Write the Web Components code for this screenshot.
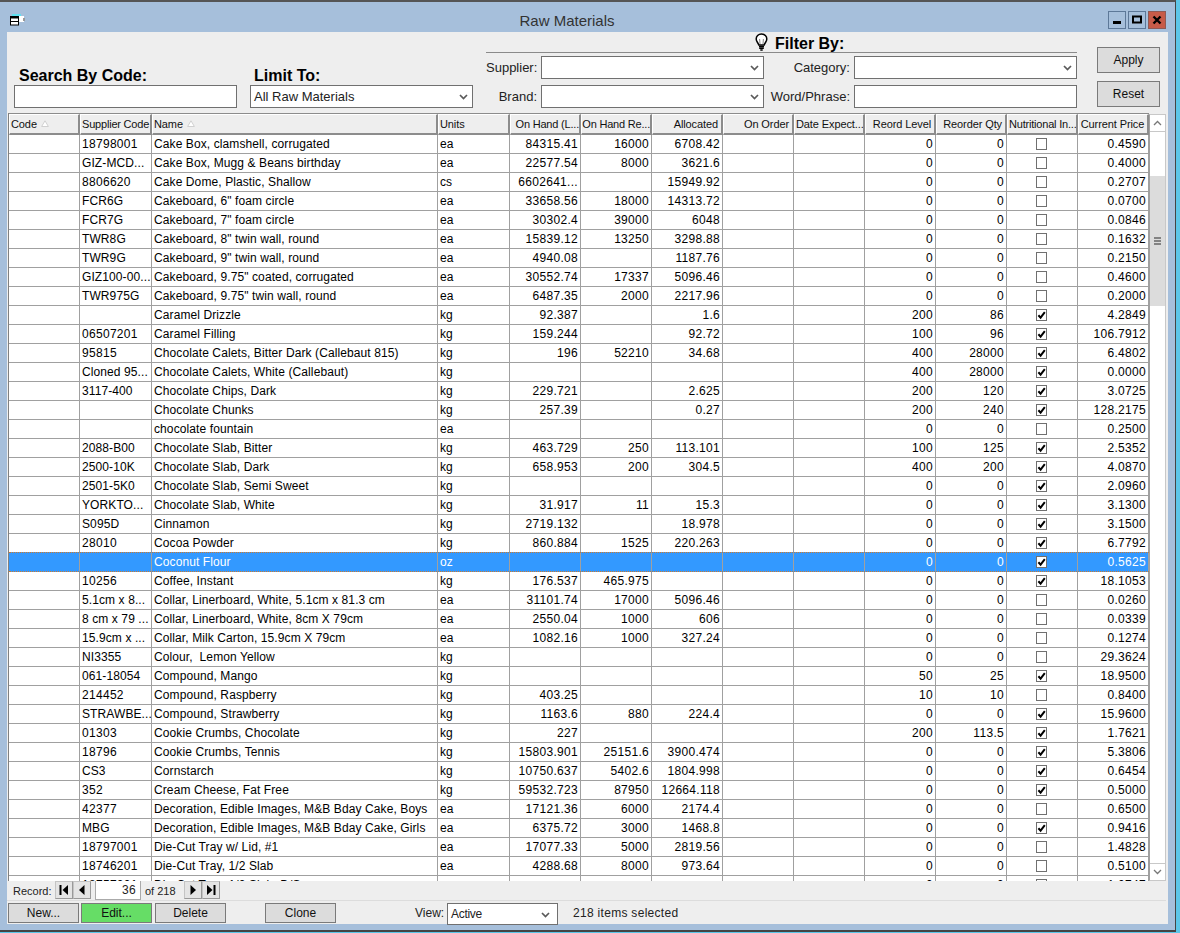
<!DOCTYPE html>
<html>
<head>
<meta charset="utf-8">
<title>Raw Materials</title>
<style>
    html, body { margin: 0; padding: 0; background: #5cc6e8; }
    body { font: 12px "Liberation Sans", Arial, sans-serif; color: #000; width: 1180px; height: 933px; overflow: hidden; }
</style>
</head>
<body>
<raw-window heading="Raw Materials">
    <filter-panel></filter-panel>
    <data-grid></data-grid>
    <record-bar current="36" total="218"></record-bar>
    <action-bar></action-bar>
</raw-window>

<script>
const CHEVRON = `<svg width="9" height="6" viewBox="0 0 9 6"><polyline points="1,1 4.5,4.5 8,1" fill="none" stroke="#5a5a5a" stroke-width="1.7"/></svg>`;

class RawWindow extends HTMLElement{
    constructor(){
        super();
        this.attachShadow({ mode: 'open' });
        this.shadowRoot.appendChild(this.getTemplate().content);
        this.shadowRoot.getElementById("heading").textContent = this.getAttribute("heading");
    }

    getTemplate(){
        const template = document.createElement("template");
        template.innerHTML = `
            <style>
                :host { display: flex; flex-direction: column; width: 1176px; height: 932px; box-sizing: border-box;
                        background: #a6bfdb; border-top: 2px solid #555; border-right: 1px solid #444; border-bottom: 2px solid #444; }
                .title { height: 30px; display: flex; align-items: center; padding: 0 9px 0 10px; box-sizing: border-box; }
                .title svg.app { flex: none; margin-top: 6px; }
                h1 { flex: 1; margin: 7px 0 0 0; padding-left: 1px; text-align: center; font: 15px "Liberation Sans", Arial, sans-serif; color: #333; }
                .caps { display: flex; gap: 2px; margin-top: 6px; }
                .cap { width: 18px; height: 18px; box-sizing: border-box; border: 1px solid #5d7898; background: #a6bfdb; display: flex; align-items: center; justify-content: center; }
                .cap.close { background: #c75b49; border-color: #8f5a55; }
                .body { margin: 0 7px 6px 7px; flex: 1; background: #eee; display: flex; flex-direction: column; min-height: 0; }
            </style>
            <div class="title">
                <svg class="app" width="15" height="12" viewBox="0 0 15 12">
                    <rect x="2" y="0" width="9" height="3" fill="#5fe0f0"/>
                    <rect x="7" y="2" width="7" height="6" fill="#fff"/>
                    <rect x="13" y="4" width="2" height="3" fill="#999"/>
                    <rect x="0.5" y="2.5" width="8" height="8.5" fill="#fff" stroke="#000"/>
                    <rect x="0.5" y="2.5" width="8" height="2" fill="#000"/>
                    <line x1="1" y1="7.5" x2="8" y2="7.5" stroke="#000"/>
                </svg>
                <h1 id="heading"></h1>
                <div class="caps">
                    <div class="cap"><svg width="10" height="10"><rect x="1" y="6" width="8" height="3" fill="#000"/></svg></div>
                    <div class="cap"><svg width="10" height="10"><rect x="1" y="1.5" width="8" height="6" fill="none" stroke="#000" stroke-width="2"/></svg></div>
                    <div class="cap close"><svg width="10" height="10"><path d="M1.5 1.5 L8.5 8.5 M8.5 1.5 L1.5 8.5" stroke="#000" stroke-width="2.4"/></svg></div>
                </div>
            </div>
            <div class="body"><slot></slot></div>
        `;
        return template;
    }
}

class ComboBox extends HTMLElement{
    constructor(){
        super();
        this.attachShadow({ mode: 'open' });
        this.shadowRoot.appendChild(this.getTemplate().content);
    }

    getTemplate(){
        const template = document.createElement("template");
        template.innerHTML = `
            <style>
                :host { display: flex; align-items: center; box-sizing: border-box; height: 23px; background: #fff; border: 1px solid #707070;
                        padding: 0 4px 0 3px; font: 13px "Liberation Sans", Arial, sans-serif; color: #222; }
                span { flex: 1; white-space: nowrap; }
                svg { flex: none; margin-top: 1px; }
            </style>
            <span><slot></slot></span>${CHEVRON}
        `;
        return template;
    }
}

class WinButton extends HTMLElement{
    constructor(){
        super();
        this.attachShadow({ mode: 'open' });
        this.shadowRoot.appendChild(this.getTemplate().content);
    }

    getTemplate(){
        const template = document.createElement("template");
        template.innerHTML = `
            <style>
                :host { display: flex; align-items: center; justify-content: center; box-sizing: border-box; background: #dcdcdc; border: 1px solid #7a7a7a;
                        font: 12px "Liberation Sans", Arial, sans-serif; color: #111; }
                :host([green]) { background: #66dd66; }
            </style>
            <slot></slot>
        `;
        return template;
    }
}

class FilterPanel extends HTMLElement{
    constructor(){
        super();
        this.attachShadow({ mode: 'open' });
        this.shadowRoot.appendChild(this.getTemplate().content);
    }

    getTemplate(){
        const template = document.createElement("template");
        template.innerHTML = `
            <style>
                :host { display: flex; height: 81px; flex: none; font: 12px "Liberation Sans", Arial, sans-serif; }
                .block { width: 223px; display: flex; flex-direction: column; justify-content: flex-end; padding-bottom: 5px; box-sizing: border-box; }
                .search { margin-left: 7px; }
                .limit { margin-left: 13px; }
                .big { font-size: 16px; font-weight: bold; line-height: 18px; }
                .search .big { padding-left: 5px; }
                .limit .big { padding-left: 4px; }
                .input { height: 23px; box-sizing: border-box; background: #fff; border: 1px solid #707070; }
                .filter { margin-left: 13px; width: 591px; display: flex; flex-direction: column; }
                .filter-head { height: 21px; border-bottom: 1px solid #8a8a8a; box-sizing: border-box; display: flex; align-items: flex-end; padding-left: 269px; }
                .filter-head svg { flex: none; margin: 0 7px 1px 0; }
                .filter-head .big { line-height: 17px; }
                .fields { margin-top: 3px; display: grid; grid-template-columns: 51px 227px 86px 227px; row-gap: 6px; }
                label { text-align: right; line-height: 23px; color: #222; font-size: 13px; white-space: nowrap; }
                .fields combo-box, .fields .input { margin-left: 4px; }
                .btns { margin-left: 20px; width: 63px; display: flex; flex-direction: column; padding-top: 15px; box-sizing: border-box; gap: 8px; }
                .btns win-button { height: 26px; }
            </style>
            <div class="block search">
                <div class="big">Search By Code:</div>
                <div class="input"></div>
            </div>
            <div class="block limit">
                <div class="big">Limit To:</div>
                <combo-box>All Raw Materials</combo-box>
            </div>
            <div class="filter">
                <div class="filter-head">
                    <svg width="13" height="18" viewBox="0 0 13 18">
                        <path d="M6.5 1 C3.2 1 1.2 3.4 1.2 6 C1.2 8.4 3 9.6 3.8 12 L9.2 12 C10 9.6 11.8 8.4 11.8 6 C11.8 3.4 9.8 1 6.5 1 Z" fill="#fff" stroke="#000" stroke-width="1.5"/>
                        <path d="M5 11 L4.6 6 M8 11 L8.4 6" stroke="#888" fill="none"/>
                        <path d="M4 13.5 L9 13.5 M4.2 15.3 L8.8 15.3 M5.3 17 L7.7 17" stroke="#000" stroke-width="1.4"/>
                    </svg>
                    <div class="big">Filter By:</div>
                </div>
                <div class="fields">
                    <label>Supplier:</label><combo-box></combo-box>
                    <label>Category:</label><combo-box></combo-box>
                    <label>Brand:</label><combo-box></combo-box>
                    <label>Word/Phrase:</label><div class="input"></div>
                </div>
            </div>
            <div class="btns">
                <win-button>Apply</win-button>
                <win-button>Reset</win-button>
            </div>
        `;
        return template;
    }
}

// supplier | name | units | on hand | on hand reserved | allocated | reorder level | reorder qty | nutritional | price
const ROWS = `18798001|Cake Box, clamshell, corrugated|ea|84315.41|16000|6708.42|0|0|0|0.4590
GIZ-MCD...|Cake Box, Mugg & Beans birthday|ea|22577.54|8000|3621.6|0|0|0|0.4000
8806620|Cake Dome, Plastic, Shallow|cs|6602641...||15949.92|0|0|0|0.2707
FCR6G|Cakeboard, 6" foam circle|ea|33658.56|18000|14313.72|0|0|0|0.0700
FCR7G|Cakeboard, 7" foam circle|ea|30302.4|39000|6048|0|0|0|0.0846
TWR8G|Cakeboard, 8" twin wall, round|ea|15839.12|13250|3298.88|0|0|0|0.1632
TWR9G|Cakeboard, 9" twin wall, round|ea|4940.08||1187.76|0|0|0|0.2150
GIZ100-00...|Cakeboard, 9.75" coated, corrugated|ea|30552.74|17337|5096.46|0|0|0|0.4600
TWR975G|Cakeboard, 9.75" twin wall, round|ea|6487.35|2000|2217.96|0|0|0|0.2000
|Caramel Drizzle|kg|92.387||1.6|200|86|1|4.2849
06507201|Caramel Filling|kg|159.244||92.72|100|96|1|106.7912
95815|Chocolate Calets, Bitter Dark (Callebaut 815)|kg|196|52210|34.68|400|28000|1|6.4802
Cloned 95...|Chocolate Calets, White (Callebaut)|kg||||400|28000|1|0.0000
3117-400|Chocolate Chips, Dark|kg|229.721||2.625|200|120|1|3.0725
|Chocolate Chunks|kg|257.39||0.27|200|240|1|128.2175
|chocolate fountain|ea||||0|0|0|0.2500
2088-B00|Chocolate Slab, Bitter|kg|463.729|250|113.101|100|125|1|2.5352
2500-10K|Chocolate Slab, Dark|kg|658.953|200|304.5|400|200|1|4.0870
2501-5K0|Chocolate Slab, Semi Sweet|kg||||0|0|1|2.0960
YORKTO...|Chocolate Slab, White|kg|31.917|11|15.3|0|0|1|3.1300
S095D|Cinnamon|kg|2719.132||18.978|0|0|1|3.1500
28010|Cocoa Powder|kg|860.884|1525|220.263|0|0|1|6.7792
|Coconut Flour|oz||||0|0|1|0.5625
10256|Coffee, Instant|kg|176.537|465.975||0|0|1|18.1053
5.1cm x 8...|Collar, Linerboard, White, 5.1cm x 81.3 cm|ea|31101.74|17000|5096.46|0|0|0|0.0260
8 cm x 79 ...|Collar, Linerboard, White, 8cm X 79cm|ea|2550.04|1000|606|0|0|0|0.0339
15.9cm x ...|Collar, Milk Carton, 15.9cm X 79cm|ea|1082.16|1000|327.24|0|0|0|0.1274
NI3355|Colour,  Lemon Yellow|kg||||0|0|0|29.3624
061-18054|Compound, Mango|kg||||50|25|1|18.9500
214452|Compound, Raspberry|kg|403.25|||10|10|0|0.8400
STRAWBE...|Compound, Strawberry|kg|1163.6|880|224.4|0|0|1|15.9600
01303|Cookie Crumbs, Chocolate|kg|227|||200|113.5|1|1.7621
18796|Cookie Crumbs, Tennis|kg|15803.901|25151.6|3900.474|0|0|1|5.3806
CS3|Cornstarch|kg|10750.637|5402.6|1804.998|0|0|1|0.6454
352|Cream Cheese, Fat Free|kg|59532.723|87950|12664.118|0|0|1|0.5000
42377|Decoration, Edible Images, M&B Bday Cake, Boys|ea|17121.36|6000|2174.4|0|0|0|0.6500
MBG|Decoration, Edible Images, M&B Bday Cake, Girls|ea|6375.72|3000|1468.8|0|0|1|0.9416
18797001|Die-Cut Tray w/ Lid, #1|ea|17077.33|5000|2819.56|0|0|0|1.4828
18746201|Die-Cut Tray, 1/2 Slab|ea|4288.68|8000|973.64|0|0|0|0.5100
18757201|Die-Cut Tray, 1/2 Slab, D/S|ea||||0|0|0|1.0747`.split("\n").map(r => r.split("|"));

const HEADERS = [
    ["Code", 71, "l", true], ["Supplier Code", 72, "l tight"], ["Name", 286, "l", true], ["Units", 72, "l"],
    ["On Hand (L...", 71, "r tight"], ["On Hand Re...", 71, "r tight"], ["Allocated", 71, "r"], ["On Order", 71, "r"],
    ["Date Expect...", 71, "l"], ["Reord Level", 71, "r"], ["Reorder Qty", 71, "r"], ["Nutritional In...", 71, "l tight"], ["Current Price", 71, "mid"]
];

const SELECTED = 22;

class DataGrid extends HTMLElement{
    constructor(){
        super();
        this.attachShadow({ mode: 'open' });
        this.shadowRoot.appendChild(this.getTemplate().content);
        this.shadowRoot.getElementById("head").innerHTML = HEADERS.map(h =>
            `<div class="hc ${h[2]}" style="width:${h[1]}px"><span>${h[0]}</span>${h[3] ? this.sortMark() : ""}</div>`).join("");
        this.shadowRoot.getElementById("rows").innerHTML = ROWS.map((r, i) => this.rowHtml(r, i)).join("");
    }

    sortMark(){
        return `<svg width="8" height="7" viewBox="0 0 8 7"><path d="M4 0.8 L7.4 6.5 L0.6 6.5 Z" fill="#fff" stroke="#d0d0d0"/></svg>`;
    }

    esc(s){
        return s.replace(/&/g, "&amp;").replace(/</g, "&lt;");
    }

    cell(text, width, align){
        return `<div class="c ${align}" style="width:${width}px">${this.esc(text)}</div>`;
    }

    rowHtml(r, i){
        const box = r[8] === "1"
            ? `<svg width="11" height="12" viewBox="0 0 11 12"><rect x="0.5" y="0.5" width="10" height="11" fill="#fff" stroke="#707070"/><path d="M2.4 6.2 L4.6 8.6 L8.8 3.2" fill="none" stroke="#000" stroke-width="2"/></svg>`
            : `<svg width="11" height="12" viewBox="0 0 11 12"><rect x="0.5" y="0.5" width="10" height="11" fill="#fff" stroke="#707070"/></svg>`;
        const supplierClass = /^[\d.]+$/.test(r[0]) ? "l n" : "l";
        return `<div class="row${i === SELECTED ? " sel" : ""}">` +
            this.cell("", 71, "l") + this.cell(r[0], 72, supplierClass) + this.cell(r[1], 286, "l") + this.cell(r[2], 72, "l") +
            this.cell(r[3], 71, "r n") + this.cell(r[4], 71, "r n") + this.cell(r[5], 71, "r n") + this.cell("", 71, "r") + this.cell("", 71, "r") +
            this.cell(r[6], 71, "r n") + this.cell(r[7], 71, "r n") +
            `<div class="c m" style="width:71px">${box}</div>` + this.cell(r[9], 71, "r n") + `</div>`;
    }

    getTemplate(){
        const template = document.createElement("template");
        template.innerHTML = `
            <style>
                :host { display: flex; height: 768px; flex: none; margin-left: 1px; margin-right: 2px; overflow: hidden; font: 12px "Liberation Sans", Arial, sans-serif; }
                .table { width: 1141px; flex: none; border-left: 1px solid #808080; box-sizing: border-box; overflow: hidden; }
                #head { display: flex; height: 22px; box-sizing: border-box; border-top: 1px solid #8c8c8c; background: #eee; }
                .hc { flex: none; box-sizing: border-box; height: 21px; display: flex; align-items: center; gap: 4px; padding: 0 1px 1px 1px; font-size: 11px; letter-spacing: -0.1px; color: #111;
                      white-space: nowrap; overflow: hidden; background: #eee; border-top: 1px solid #fff; border-left: 1px solid #fff; border-right: 2px solid #8c8c8c; border-bottom: 2px solid #8c8c8c; }
                .hc.r { justify-content: flex-end; padding-right: 3px; }
                .hc.tight { padding-right: 0; letter-spacing: -0.2px; }
                .hc.r.tight { padding-left: 0; }
                .hc.mid { justify-content: center; padding-right: 2px; }
                .row { display: flex; height: 19px; box-sizing: border-box; border-bottom: 1px solid #a0a0a0; background: #fff; }
                .c { flex: none; box-sizing: border-box; height: 18px; line-height: 17px; padding: 1px 2px 0 2px; border-right: 1px solid #a0a0a0; white-space: pre; overflow: hidden; letter-spacing: 0.1px; }
                .c.r { text-align: right; }
                .c.n { letter-spacing: 0.3px; }
                .c.m { display: flex; align-items: center; justify-content: center; padding: 0 1px 0 0; }
                .row.sel { background: #3399ff; color: #fff; height: 20px; margin-top: -1px; border-top: 1px dotted #d07a2a; border-bottom: 1px dotted #d07a2a; }
                .scroll { width: 17px; flex: none; box-sizing: border-box; margin-top: 1px; background: #fff; display: flex; flex-direction: column; border-left: 1px solid #a0a0a0; border-right: 1px solid #c8c8c8; border-bottom: 1px solid #c8c8c8; border-top: 1px solid #c8c8c8; }
                .arrow { height: 16px; flex: none; display: flex; align-items: center; justify-content: center; background: #fff; }
                .arrow.up { border-bottom: 1px solid #c8c8c8; }
                .arrow.down { border-top: 1px solid #c8c8c8; }
                .track { flex: 1; padding-top: 44px; }
                .thumb { height: 130px; background: #dcdcdc; display: flex; align-items: center; justify-content: center; }
            </style>
            <div class="table">
                <div id="head"></div>
                <div id="rows"></div>
            </div>
            <div class="scroll">
                <div class="arrow up"><svg width="9" height="6" viewBox="0 0 9 6"><polyline points="1,5 4.5,1.5 8,5" fill="none" stroke="#777" stroke-width="1.3"/></svg></div>
                <div class="track">
                    <div class="thumb"><svg width="7" height="8" viewBox="0 0 7 8"><path d="M0 1 H7 M0 4 H7 M0 7 H7" stroke="#666" stroke-width="1.5"/></svg></div>
                </div>
                <div class="arrow down"><svg width="9" height="6" viewBox="0 0 9 6"><polyline points="1,1 4.5,4.5 8,1" fill="none" stroke="#777" stroke-width="1.3"/></svg></div>
            </div>
        `;
        return template;
    }
}

class RecordBar extends HTMLElement{
    constructor(){
        super();
        this.attachShadow({ mode: 'open' });
        this.shadowRoot.appendChild(this.getTemplate().content);
        this.shadowRoot.getElementById("current").textContent = this.getAttribute("current");
        this.shadowRoot.getElementById("total").textContent = "of " + this.getAttribute("total");
    }

    getTemplate(){
        const template = document.createElement("template");
        template.innerHTML = `
            <style>
                :host { display: flex; align-items: flex-start; height: 20px; flex: none; box-sizing: border-box; border-bottom: 1px solid #dcdcdc; margin-right: 2px; padding-left: 6px; font: 11px "Liberation Sans", Arial, sans-serif; color: #222; }
                .lbl { line-height: 20px; width: 42px; }
                .nav { width: 18px; height: 18px; box-sizing: border-box; background: #e4e4e4; border: 1px solid #c4c4c4; border-right-color: #999; border-bottom-color: #999; display: flex; align-items: center; justify-content: center; }
                .cur { width: 46px; height: 19px; margin-left: 4px; box-sizing: border-box; background: #fff; border: 1px solid #aaa; border-top: none; text-align: right; line-height: 19px; padding-right: 4px; font-size: 12px; letter-spacing: 0.3px; }
                #total { width: 39px; margin-left: 4px; line-height: 20px; }
            </style>
            <div class="lbl">Record:</div>
            <div class="nav"><svg width="10" height="10"><rect x="0.5" y="0" width="2" height="10"/><path d="M9 0 V10 L3.5 5 Z"/></svg></div>
            <div class="nav"><svg width="8" height="10"><path d="M6.5 0 V10 L1 5 Z"/></svg></div>
            <div class="cur" id="current"></div>
            <div id="total"></div>
            <div class="nav"><svg width="8" height="10"><path d="M1.5 0 V10 L7 5 Z"/></svg></div>
            <div class="nav"><svg width="10" height="10"><path d="M1 0 V10 L6.5 5 Z"/><rect x="7.5" y="0" width="2" height="10"/></svg></div>
        `;
        return template;
    }
}

class ActionBar extends HTMLElement{
    constructor(){
        super();
        this.attachShadow({ mode: 'open' });
        this.shadowRoot.appendChild(this.getTemplate().content);
    }

    getTemplate(){
        const template = document.createElement("template");
        template.innerHTML = `
            <style>
                :host { display: flex; align-items: flex-start; flex: 1; padding: 2px 0 0 1px; font: 12px "Liberation Sans", Arial, sans-serif; color: #222; }
                win-button { width: 71px; height: 20px; }
                .g1 { margin-left: 2px; }
                .g2 { margin-left: 3px; }
                .g3 { margin-left: 39px; }
                .view { margin-left: 79px; line-height: 20px; width: 32px; }
                combo-box { width: 111px; height: 22px; font-size: 12px; letter-spacing: -0.3px; padding-right: 7px; }
                .count { margin-left: 15px; line-height: 20px; letter-spacing: 0.3px; }
            </style>
            <win-button>New...</win-button>
            <win-button class="g1" green>Edit...</win-button>
            <win-button class="g2">Delete</win-button>
            <win-button class="g3">Clone</win-button>
            <div class="view">View:</div>
            <combo-box>Active</combo-box>
            <div class="count">218 items selected</div>
        `;
        return template;
    }
}

customElements.define("raw-window", RawWindow);
customElements.define("combo-box", ComboBox);
customElements.define("win-button", WinButton);
customElements.define("filter-panel", FilterPanel);
customElements.define("data-grid", DataGrid);
customElements.define("record-bar", RecordBar);
customElements.define("action-bar", ActionBar);
</script>
</body>
</html>
